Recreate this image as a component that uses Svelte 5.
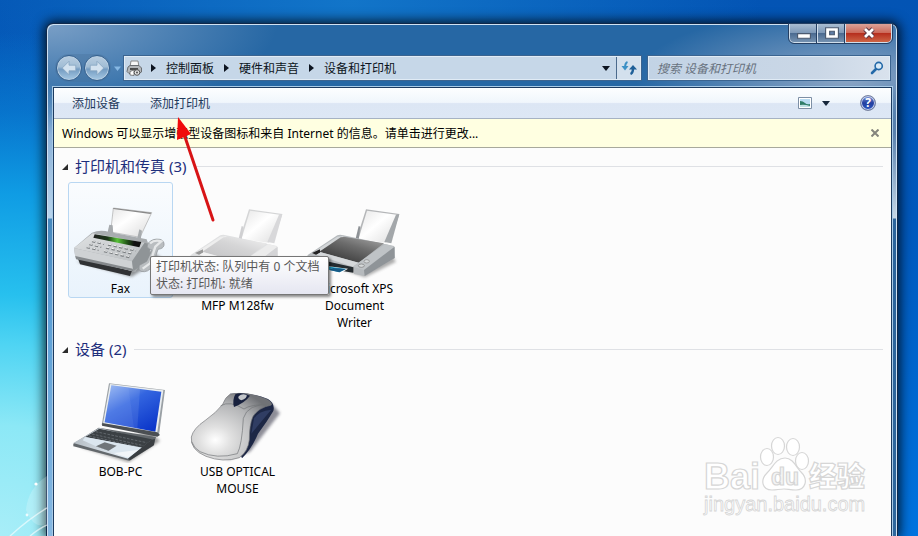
<script>
  const crumbs = ['控制面板', '硬件和声音', '设备和打印机'];
  const groups = [
    {
      title: '打印机和传真',
      items: [
        { art: 'fax', label: 'Fax', active: true },
        { art: 'laser', label: 'HP LaserJet Pro MFP M128fw' },
        { art: 'xps', label: 'Microsoft XPS Document Writer' }
      ]
    },
    {
      title: '设备',
      items: [
        { art: 'laptop', label: 'BOB-PC' },
        { art: 'mouse', label: 'USB OPTICAL MOUSE' }
      ]
    }
  ];
  let query = $state('');
</script>

{#snippet down()}
  <svg class="down" viewBox="0 0 8 5" aria-hidden="true"><path d="M0 0H8L4 5Z" fill="currentColor" /></svg>
{/snippet}

{#snippet printer(id, dark)}
  <svg class="art" viewBox="39 -21 309 291" aria-hidden="true">
    <defs>
      <linearGradient id="{id}-lid" x1="1" y1="0" x2="0.2" y2="1">
        <stop offset="0" stop-color={dark ? '#aaa' : '#f2f2f2'} />
        <stop offset="0.45" stop-color={dark ? '#6c6c6c' : '#d5d5d6'} />
        <stop offset="1" stop-color={dark ? '#333' : '#c2c2c4'} />
      </linearGradient>
      <linearGradient id="{id}-paper" x1="0" y1="0" x2="1" y2="1">
        <stop offset="0" stop-color="#e6e6e6" /><stop offset="0.45" stop-color="#fff" /><stop offset="1" stop-color="#ddd" />
      </linearGradient>
      <filter id="{id}-blur"><feGaussianBlur stdDeviation="4" /></filter>
    </defs>
    <path d="M80 212L225 262 318 215 300 190Z" fill="#777" opacity={dark ? 0.6 : 0.25} filter="url(#{id}-blur)" />
    <path d="M200 146L228 58 328 72 302 152Z" fill={dark ? '#b4b6b8' : '#d4d5d6'} />
    <path d="M207 142L231 62 320 74 288 158 207 148Z" fill="url(#{id}-paper)" />
    <path d="M196 150L206 108 211 110 206 148Z" fill={dark ? '#8e9296' : '#d0d0d2'} />
    <path d="M283 156L318 74 328 73 304 160Z" fill={dark ? '#a3a7aa' : '#d8d8da'} />
    <path d="M52 196L142 136Q150 133 160 136L312 168 314 204 224 258 192 252 192 232 58 206Z" fill={dark ? '#b6babd' : '#e0e1e2'} />
    <path d="M62 192L142 140 160 138 160 142 88 186Z" fill={dark ? '#d3d6d8' : '#eee'} />
    <path d="M88 185L152 142Q158 140 166 141L282 160 206 218Z" fill="url(#{id}-lid)" />
    <path d="M66 189L90 178 90 188 78 194Z" fill={dark ? '#222' : '#999'} />
    <path d="M80 194L92 187 206 218 188 230Z" fill={dark ? '#d5d8da' : '#f3f3f3'} />
    <path d="M188 230L286 162 314 170 222 240Z" fill={dark ? '#bfc3c6' : '#ececec'} />
    <path d="M222 240L314 170 314 204 224 258Z" fill={dark ? '#8f9498' : '#d4d4d6'} />
    <path d="M110 214L190 232 190 248 115 236Z" fill={dark ? '#252c30' : '#bbb'} />
    <path d="M110 228L174 236 150 251 98 238Z" fill="#fff" />
    <path d="M112 229L168 237 148 247 104 236Z" fill="#27a0c8" />
    <path d="M130 234L168 237 148 247 118 240Z" fill="#185b86" />
    <ellipse cx="214" cy="227" rx="9" ry="5" fill="#d5d8d9" stroke="#777" stroke-width="2" />
    <ellipse cx="230" cy="214" rx="8" ry="5" fill="#d5d8d9" stroke="#888" stroke-width="2" />
  </svg>
{/snippet}

{#snippet fax()}
  <svg class="art" viewBox="57 99 309 291" aria-hidden="true">
    <defs>
      <linearGradient id="fax-top" x1="0" y1="0" x2="1" y2="1">
        <stop offset="0" stop-color="#e1e3e4" /><stop offset="1" stop-color="#b9bdc0" />
      </linearGradient>
      <linearGradient id="fax-bar"><stop offset="0" stop-color="#222" /><stop offset="0.3" stop-color="#1c3718" /><stop offset="0.5" stop-color="#58c238" /><stop offset="0.7" stop-color="#235719" /><stop offset="0.85" stop-color="#111" /></linearGradient>
      <linearGradient id="fax-paper" x1="0" y1="0" x2="1" y2="1"><stop offset="0" stop-color="#e5e5e5" /><stop offset="0.4" stop-color="#fff" /><stop offset="1" stop-color="#d9d9d9" /></linearGradient>
      <filter id="fax-blur"><feGaussianBlur stdDeviation="4" /></filter>
    </defs>
    <path d="M80 335L245 380 335 325 300 300Z" fill="#555" opacity="0.6" filter="url(#fax-blur)" />
    <path d="M182 246L190 174 305 188 270 262Z" fill="url(#fax-paper)" stroke="#aaa" stroke-width="2" />
    <path d="M190 174L305 188 301 192 190 177Z" fill="#888" />
    <path d="M172 250L178 224 188 226 190 254Z" fill="#a7abae" />
    <path d="M262 264L268 238 276 242 272 270Z" fill="#a7abae" />
    <path d="M84 326L90 343 240 378 246 362Z" fill="#303234" />
    <path d="M72 294L126 248Q150 238 178 246L290 268 300 296 256 366 76 322Z" fill="#a8acaf" />
    <path d="M72 294L128 250 284 278 246 334Z" fill="url(#fax-top)" />
    <path d="M72 294L246 334 250 364 76 322Z" fill="#cfd2d4" />
    <path d="M246 334L284 278 302 284 296 330 250 364Z" fill="#8f9497" />
    <path d="M76 318L248 356 250 364 78 328Z" fill="#85898c" />
    <path d="M134 253L274 276 268 292 130 263Z" fill="url(#fax-bar)" />
    <g stroke="#7b7f82" stroke-width="6" stroke-dasharray="10 7">
      <path d="M126 274L162 282M118 283L154 291M110 292L146 300" />
      <path d="M174 284L258 302M168 293L250 312M162 304L240 322" />
    </g>
    <g stroke="#f4f4f4" stroke-width="3" stroke-dasharray="9 8"><path d="M126 272L162 280M118 281L154 289M110 290L146 298M174 282L258 300M168 291L250 310M162 302L240 320" /></g>
    <path d="M294 280Q308 264 330 268Q344 272 342 286Q340 296 324 298L308 346Q296 370 272 364Q264 360 268 346L290 334 306 300 296 296Q288 290 294 280Z" fill="#b9bdc0" stroke="#8b8f92" stroke-width="2" />
    <path d="M300 280Q314 268 334 274L316 290 300 340 278 356" fill="none" stroke="#e6e8e9" stroke-width="7" />
  </svg>
{/snippet}

{#snippet laptop()}
  <svg class="art" viewBox="57 93 309 291" aria-hidden="true">
    <defs>
      <linearGradient id="lap-screen" x1="0.1" y1="0" x2="0.8" y2="1"><stop offset="0" stop-color="#8eb0f0" /><stop offset="0.4" stop-color="#3365e0" /><stop offset="1" stop-color="#0a35c9" /></linearGradient>
      <linearGradient id="lap-base" x1="0" y1="0" x2="1" y2="0"><stop offset="0" stop-color="#b5bdc4" /><stop offset="0.6" stop-color="#e1eaf2" /><stop offset="1" stop-color="#b8cfe0" /></linearGradient>
      <filter id="lap-blur"><feGaussianBlur stdDeviation="4" /></filter>
    </defs>
    <path d="M90 336L236 382 330 318 300 290Z" fill="#555" opacity="0.55" filter="url(#lap-blur)" />
    <path d="M177 145L345 165 327 300 155 270Z" fill="#9aa0a5" />
    <path d="M180 147L340 166 321 298 159 267Z" fill="#e9edf0" />
    <path d="M184 151L334 170 316 290 164 262Z" fill="url(#lap-screen)" />
    <path d="M184 151L236 158 252 278 164 262Z" fill="#bcd0fa" opacity="0.2" />
    <path d="M236 158L270 162 262 280 252 278Z" fill="#cbdafa" opacity="0.12" />
    <path d="M157 264L322 292 330 300 322 305 156 272Z" fill="#4b4f53" />
    <path d="M70 326L146 278 318 306 310 332 238 377 70 334Z" fill="#63686c" />
    <path d="M70 324L148 279 300 318 234 371Z" fill="url(#lap-base)" />
    <path d="M106 306L148 281 306 313 276 338Z" fill="#3b4044" />
    <path d="M137 290L290 323M126 297L280 332M117 303L270 336" stroke="#747a80" stroke-width="2" stroke-dasharray="8 4" />
    <path d="M138 334L164 322 200 332 176 347Z" fill="#707579" />
    <path d="M98 316L138 334 176 347 234 366 276 338 106 306Z" fill="#dbe6ef" />
    <path d="M138 334L164 322 200 332 176 347Z" fill="#707579" />
    <path d="M192 354L268 344 234 368Z" fill="#fff" opacity="0.6" />
    <path d="M304 314L315 312 312 330 240 376 234 371Z" fill="#3a3e42" />
  </svg>
{/snippet}

{#snippet mouse()}
  <svg class="art" viewBox="408 93 309 291" aria-hidden="true">
    <defs>
      <radialGradient id="mouse-body" cx="0.3" cy="0.7" r="0.8"><stop offset="0" stop-color="#fff" /><stop offset="0.25" stop-color="#e0e0e0" /><stop offset="0.7" stop-color="#b3b4b6" /><stop offset="1" stop-color="#707276" /></radialGradient>
      <filter id="mouse-blur"><feGaussianBlur stdDeviation="5" /></filter>
    </defs>
    <path d="M530 376L600 350 690 235 660 200 560 330Z" fill="#445" opacity="0.6" filter="url(#mouse-blur)" />
    <path d="M540 176Q600 170 654 192Q676 206 670 228Q650 262 624 296Q606 340 576 370L560 330 600 240Z" fill="#1d2745" />
    <path d="M540 178Q592 168 648 192Q666 200 664 210Q624 218 608 246Q598 270 598 314Q594 350 568 368Q520 384 468 364Q420 344 424 306Q430 280 466 256Q500 232 518 208Q526 186 540 178Z" fill="url(#mouse-body)" stroke="#77797c" stroke-width="2" />
    <path d="M662 208Q592 206 580 250Q576 330 562 356Q500 374 450 350Q432 340 425 320" fill="none" stroke="#707276" stroke-width="2" />
    <path d="M512 212Q540 196 582 222Q600 208 660 208" fill="none" stroke="#707276" stroke-width="2" />
    <path d="M556 178Q574 170 600 182Q586 202 552 216Q546 196 556 178Z" fill="#18213e" />
    <path d="M566 184Q576 174 590 180Q592 190 574 196Q562 192 566 184Z" fill="#c3c6ca" />
    <path d="M612 250Q626 228 664 224Q640 252 604 296Z" fill="#303d63" />
  </svg>
{/snippet}

<div class="desktop">
  <svg class="flare" viewBox="0 0 47 90" aria-hidden="true">
    <path d="M47 30Q28 42 26 64Q34 84 47 78Z" fill="#fff" opacity="0.2" />
    <path d="M10 90Q30 72 47 62M30 90Q40 82 47 79" fill="none" stroke="#fff" stroke-width="1.5" opacity="0.6" />
    <circle cx="36" cy="38" r="1.6" fill="#fff" /><circle cx="27" cy="69" r="1.4" fill="#fff" opacity="0.8" />
  </svg>

  <div class="window">
    <header class="caption">
      <button class="ctl" aria-label="最小化"><svg viewBox="0 0 12 12"><path d="M0.5 6.5H11.5V10.5H0.5Z" fill="#fff" stroke="#4b5a70" /></svg></button>
      <button class="ctl" aria-label="最大化"><svg viewBox="0 0 12 12"><path d="M0.5 1.5H11.5V10.5H0.5Z" fill="#fff" stroke="#4b5a70" /><path d="M4 4.5H8V7.5H4Z" fill="#5f7da5" stroke="#4b5a70" /></svg></button>
      <button class="ctl close" aria-label="关闭"><svg viewBox="0 0 12 12"><path d="M2 2L10 10M10 2L2 10" stroke="#5b3540" stroke-width="4.6" /><path d="M2 2L10 10M10 2L2 10" stroke="#fff" stroke-width="2.8" /></svg></button>
    </header>

    <nav class="nav">
      <div class="travel">
        <button class="round" aria-label="后退"><svg viewBox="0 0 16 16"><path d="M8 2L2 8L8 14V10.5H14V5.5H8Z" fill="#d3e2ef" stroke="#86a5c1" stroke-width="0.7" /></svg></button>
        <button class="round" aria-label="前进"><svg viewBox="0 0 16 16"><path d="M8 2L14 8L8 14V10.5H2V5.5H8Z" fill="#d3e2ef" stroke="#86a5c1" stroke-width="0.7" /></svg></button>
      </div>
      <button class="recent" aria-label="最近的页面"><svg viewBox="0 0 7 5"><path d="M0 0.5H7L3.5 5Z" fill="#86b8e4" /></svg></button>
      <div class="address">
        <svg class="place" viewBox="0 0 17 17" aria-hidden="true">
          <path d="M5 1H12L13 7H4Z" fill="#f8f8f8" stroke="#888" />
          <path d="M2 7L4 5.5H13L15.5 8V12L13 13.5H3L1 11.5Z" fill="#b4b7ba" stroke="#6a6e72" />
          <path d="M4 9H12" stroke="#333" stroke-width="1.6" />
          <path d="M4 11.5L8 10V15.5L4 15Z" fill="#fff" stroke="#666" stroke-width="0.8" />
          <circle cx="11" cy="12.5" r="2.8" fill="#e2e2e2" stroke="#555" /><circle cx="11" cy="12.5" r="0.9" fill="#444" />
        </svg>
        {#each crumbs as crumb}
          <svg class="sep" viewBox="0 0 5 8" aria-hidden="true"><path d="M0 0L5 4L0 8Z" fill="#0c1420" /></svg>
          <button class="crumb">{crumb}</button>
        {/each}
        <button class="history" aria-label="以前的位置">{@render down()}</button>
        <button class="refresh" aria-label="刷新">
          <svg viewBox="0 0 16 14"><path d="M6.5 1Q4 2 4 7" fill="none" stroke="#3a8fc4" stroke-width="2" /><path d="M0.5 5H7.5L4 9.5Z" fill="#3c91c6" /><path d="M9.5 13Q12 12 12 7" fill="none" stroke="#1e5f98" stroke-width="2.4" /><path d="M8 8.500H16L12 4Z" fill="#1e5f98" /></svg>
        </button>
      </div>
      <label class="search">
        <input type="text" aria-label="搜索" placeholder="搜索 设备和打印机" bind:value={query} />
        <svg viewBox="0 0 14 14" aria-hidden="true"><path d="M6.5 7.5L2 12" stroke="#2469a8" stroke-width="2.6" stroke-linecap="round" /><circle cx="8.7" cy="5" r="3.6" fill="#d9eaf7" stroke="#2469a8" stroke-width="1.6" /></svg>
      </label>
    </nav>

    <div class="client">
      <div class="toolbar">
        <button class="cmd">添加设备</button>
        <button class="cmd">添加打印机</button>
        <button class="view" aria-label="更改视图">
          <svg viewBox="0 0 14 12"><path d="M0.5 0.5H13.5V11.5H0.5Z" fill="#fff" stroke="#7d8fa5" /><path d="M2 2H12V10H2Z" fill="#b9dcf2" /><path d="M2 4Q5 4 7 6T12 7V10H2Z" fill="#2f7c68" /><path d="M2 8Q6 7 12 9V10H2Z" fill="#bfe0e4" /></svg>
          {@render down()}
        </button>
        <button class="help" aria-label="帮助"><span>?</span></button>
      </div>

      <div class="notice">
        <button class="message">Windows 可以显示增强型设备图标和来自 Internet 的信息。请单击进行更改...</button>
        <button class="dismiss" aria-label="关闭信息栏"><svg viewBox="0 0 8 8"><path d="M0.5 0.5L7.5 7.5M7.5 0.5L0.5 7.5" stroke="#85857c" stroke-width="2" /></svg></button>
      </div>

      <main>
        {#each groups as group}
          <section>
            <h2>
              <svg viewBox="0 0 6 6" aria-hidden="true"><path d="M6 0V6H0Z" fill="#2b2b2b" /></svg>
              <span>{group.title} ({group.items.length})</span>
            </h2>
            <ul>
              {#each group.items as item}
                <li>
                  <button class="tile" class:active={item.active}>
                    {#if item.art === 'fax'}{@render fax()}
                    {:else if item.art === 'laser'}{@render printer('laser', false)}
                    {:else if item.art === 'xps'}{@render printer('xps', true)}
                    {:else if item.art === 'laptop'}{@render laptop()}
                    {:else}{@render mouse()}{/if}
                    <span>{item.label}</span>
                  </button>
                </li>
              {/each}
            </ul>
          </section>
        {/each}
      </main>

      <div class="tooltip" role="tooltip">打印机状态: 队列中有 0 个文档<br />状态: 打印机: 就绪</div>

      <svg class="pointer" viewBox="0 0 44 106" aria-hidden="true">
        <path d="M39 103L10 17" stroke="#d81416" stroke-width="3" stroke-linecap="round" /><path d="M4 0L17 17L3 23Z" fill="#f00b0b" />
      </svg>
    </div>
  </div>

  <svg class="mark" viewBox="0 0 170 84" aria-hidden="true">
    <g fill="#fff" stroke="#d6d6d6" stroke-width="1.2">
      <text x="2" y="53" font-size="36" font-weight="700">Bai</text>
      <ellipse cx="65" cy="21" rx="6.5" ry="8.5" /><ellipse cx="76" cy="10" rx="6.5" ry="8.5" />
      <ellipse cx="91" cy="11" rx="6.5" ry="8.5" /><ellipse cx="100" cy="25" rx="6.5" ry="8.5" />
      <path d="M83 22C91 22 94 31 99 36C107 44 103 54 94 54C88 54 86 53 82 53C77 53 75 54 70 54C60 54 58 44 65 37C71 31 74 22 83 22Z" />
      <text x="69" y="49" font-size="23" font-weight="700" fill="#f4f4f4">du</text>
      <text x="107" y="51" font-size="28" font-weight="900">经验</text>
      <text x="2" y="75" font-size="20" stroke-width="0.8">jingyan.baidu.com</text>
    </g>
  </svg>
</div>

<style>
  .desktop {
    position: relative;
    display: flex;
    height: 100vh;
    overflow: hidden;
    box-sizing: border-box;
    padding: 23px 20px 0 46px;
    font: 12px/17px 'Noto Sans', 'Noto Sans CJK SC', sans-serif;
    background:
      radial-gradient(ellipse 60% 94% at 0 100%, #a8eef8 0, #8ce8f6 22%, #4fd4f3 38%, #27c0ee 48%, #0f9ce4 68%, #0a82d6aa 84%, #0a7fd400 100%),
      radial-gradient(ellipse 45% 60% at 38% 0, #1275c9, #1275c900),
      linear-gradient(#0354b4, #0058bc 40%, #0073df);
  }
  button {
    padding: 0;
    border: 0;
    background: none;
    color: inherit;
    font: inherit;
  }
  svg { display: block; }
  .flare { position: absolute; left: 0; bottom: 0; width: 47px; }

  .window {
    flex: 1;
    min-width: 0;
    display: flex;
    flex-direction: column;
    padding: 0 5px 0 6px;
    border: 1px solid #10284a;
    border-bottom: 0;
    border-radius: 7px 7px 0 0;
    box-shadow: inset 1px 1px #cfe2f3, inset -1px 0 #cfe2f3, 0 0 12px 2px #000c;
    background:
      linear-gradient(#0000 60px, #8ab1d8 110px, #b8d4ec 194px, #4688bd 195px, #5da0d6 300px, #86b8e2) left / 8px 100% no-repeat,
      linear-gradient(#0000 60px, #5a82ae 110px, #c5d6e6 194px, #2b649c 195px, #2e679d) right / 8px 100% no-repeat,
      radial-gradient(ellipse 230px 90px at 0 0, #7a9fc6, #7a9fc600),
      radial-gradient(ellipse 210px 70px at 94% 55px, #8ba5c5, #8ba5c500),
      #2667a4;
  }
  .caption { display: flex; justify-content: flex-end; height: 31px; }
  .ctl {
    display: grid;
    place-items: center;
    box-sizing: border-box;
    width: 28px;
    height: 19px;
    border: 1px solid #d0deeb;
    border-top: 0;
    border-right-width: 0;
    outline: 1px solid #243f63;
    background: linear-gradient(#a9bdd2, #7e99b8 48%, #49698f 50%, #7592b1);
  }
  .ctl:first-child { border-radius: 0 0 0 5px; }
  .ctl svg { width: 14px; }
  .ctl.close {
    width: 47px;
    border-right-width: 1px;
    border-radius: 0 0 5px 0;
    background: linear-gradient(#dca298, #cc6b5b 48%, #b52c1c 50%, #cd6546);
  }
  .ctl.close svg { width: 12px; }

  .nav { display: flex; align-items: center; height: 26px; padding: 0 2px 6px 2px; }
  .travel { display: flex; gap: 2px; padding: 1px; border-radius: 14px; background: #476e964d; }
  .round {
    display: grid;
    place-items: center;
    box-sizing: border-box;
    width: 26px;
    height: 26px;
    border: 1px solid #35608e;
    border-radius: 50%;
    box-shadow: inset 0 0 0 1px #b9cfe2;
    background: linear-gradient(#b9cde0, #a1bdd5 45%, #749cc2 55%, #a7c9e4);
  }
  .round svg { width: 18px; }
  .recent { width: 13px; padding-left: 3px; }
  .recent svg { width: 7px; }
  .address, .search {
    display: flex;
    align-items: center;
    box-sizing: border-box;
    height: 24px;
    border: 1px solid #e0ebf5;
    outline: 1px solid #3b6490;
    background: #c6d7e8;
    color: #0c1420;
  }
  .address { flex: 1; min-width: 0; margin-right: 7px; }
  .place { width: 17px; margin-left: 1px; }
  .sep { width: 5px; margin: 0 10px; }
  .place + .sep { margin-left: 8px; }
  .crumb { white-space: nowrap; }
  .down { width: 8px; }
  .history { margin-left: auto; padding: 8px 6px; }
  .refresh {
    display: grid;
    place-items: center;
    width: 24px;
    height: 22px;
    border-left: 1px solid #4b6a8c;
    background: #d3e0ed;
  }
  .refresh svg { width: 16px; }
  .search { flex: 0 1 242px; padding: 0 5px 0 8px; background: linear-gradient(90deg, #c2d3e5, #cad7e6 70%, #d9e2ed); }
  .search input { flex: 1; min-width: 0; padding: 0; border: 0; outline: 0; background: none; font: inherit; }
  .search input::placeholder { color: #68727e; font-style: italic; opacity: 1; }
  .search svg { width: 14px; }

  .client {
    position: relative;
    flex: 1;
    border: 1px solid #1c3b60;
    border-bottom: 0;
    outline: 1px solid #a8cae6;
    background: #fcfcfc;
  }
  .toolbar {
    display: flex;
    align-items: center;
    gap: 30px;
    height: 30px;
    padding: 0 15px 0 18px;
    border-bottom: 1px solid #a6b2c3;
    background: linear-gradient(#fdfeff, #f0f6fc 48%, #dce6f4 52%, #dde7f5);
    color: #1e395b;
  }
  .view { display: flex; align-items: center; gap: 10px; margin-left: auto; color: #16263a; }
  .view svg:first-child { width: 14px; }
  .help {
    width: 16px;
    height: 16px;
    box-sizing: border-box;
    border: 1px solid #7883a0;
    border-radius: 50%;
    box-shadow: inset 0 0 0 1px #c6d0ea;
    background: linear-gradient(#7891d8, #2440a0 50%, #2a55c0);
    color: #fff;
    font-weight: 700;
    line-height: 14px;
  }
  .notice {
    display: flex;
    align-items: center;
    justify-content: space-between;
    height: 28px;
    padding: 0 12px 0 8px;
    border-bottom: 1px solid #a8a99c;
    background: #ffffe1;
    color: #000;
  }
  .dismiss svg { width: 8px; }

  main { padding: 9px 8px 0; }
  h2 {
    display: flex;
    align-items: center;
    margin: 0;
    color: #1e2f7c;
    font-size: 15px;
    font-weight: 400;
    line-height: 19px;
  }
  h2 svg { width: 6px; margin-right: 7px; }
  h2::after { content: ''; flex: 1; height: 1px; margin-left: 8px; background: #dfe1e5; }
  ul { display: flex; flex-wrap: wrap; gap: 12px; margin: 0; padding: 6px 6px 8px; list-style: none; }
  .tile {
    display: block;
    box-sizing: border-box;
    width: 105px;
    border: 1px solid transparent;
    border-radius: 3px;
    color: #000;
    text-align: center;
  }
  .tile.active { border-color: #b9d7f2; background: linear-gradient(#fafcfe, #e9f3fc); }
  .tile span { display: block; padding: 0 6px; }
  .art { width: 103px; height: 97px; }

  .tooltip {
    position: absolute;
    left: 96px;
    top: 168px;
    padding: 1px 9px 2px 5px;
    border: 1px solid #767676;
    border-radius: 2px;
    box-shadow: 2px 2px 3px #0007;
    background: linear-gradient(#fff, #e5e6f1);
    color: #575757;
    white-space: nowrap;
  }
  .pointer { position: absolute; left: 120px; top: 29px; width: 44px; height: 106px; pointer-events: none; }
  .mark {
    position: absolute;
    right: 46px;
    bottom: 16px;
    width: 170px;
    height: 84px;
    font-family: 'Liberation Sans', 'Noto Sans CJK SC', sans-serif;
  }
</style>
